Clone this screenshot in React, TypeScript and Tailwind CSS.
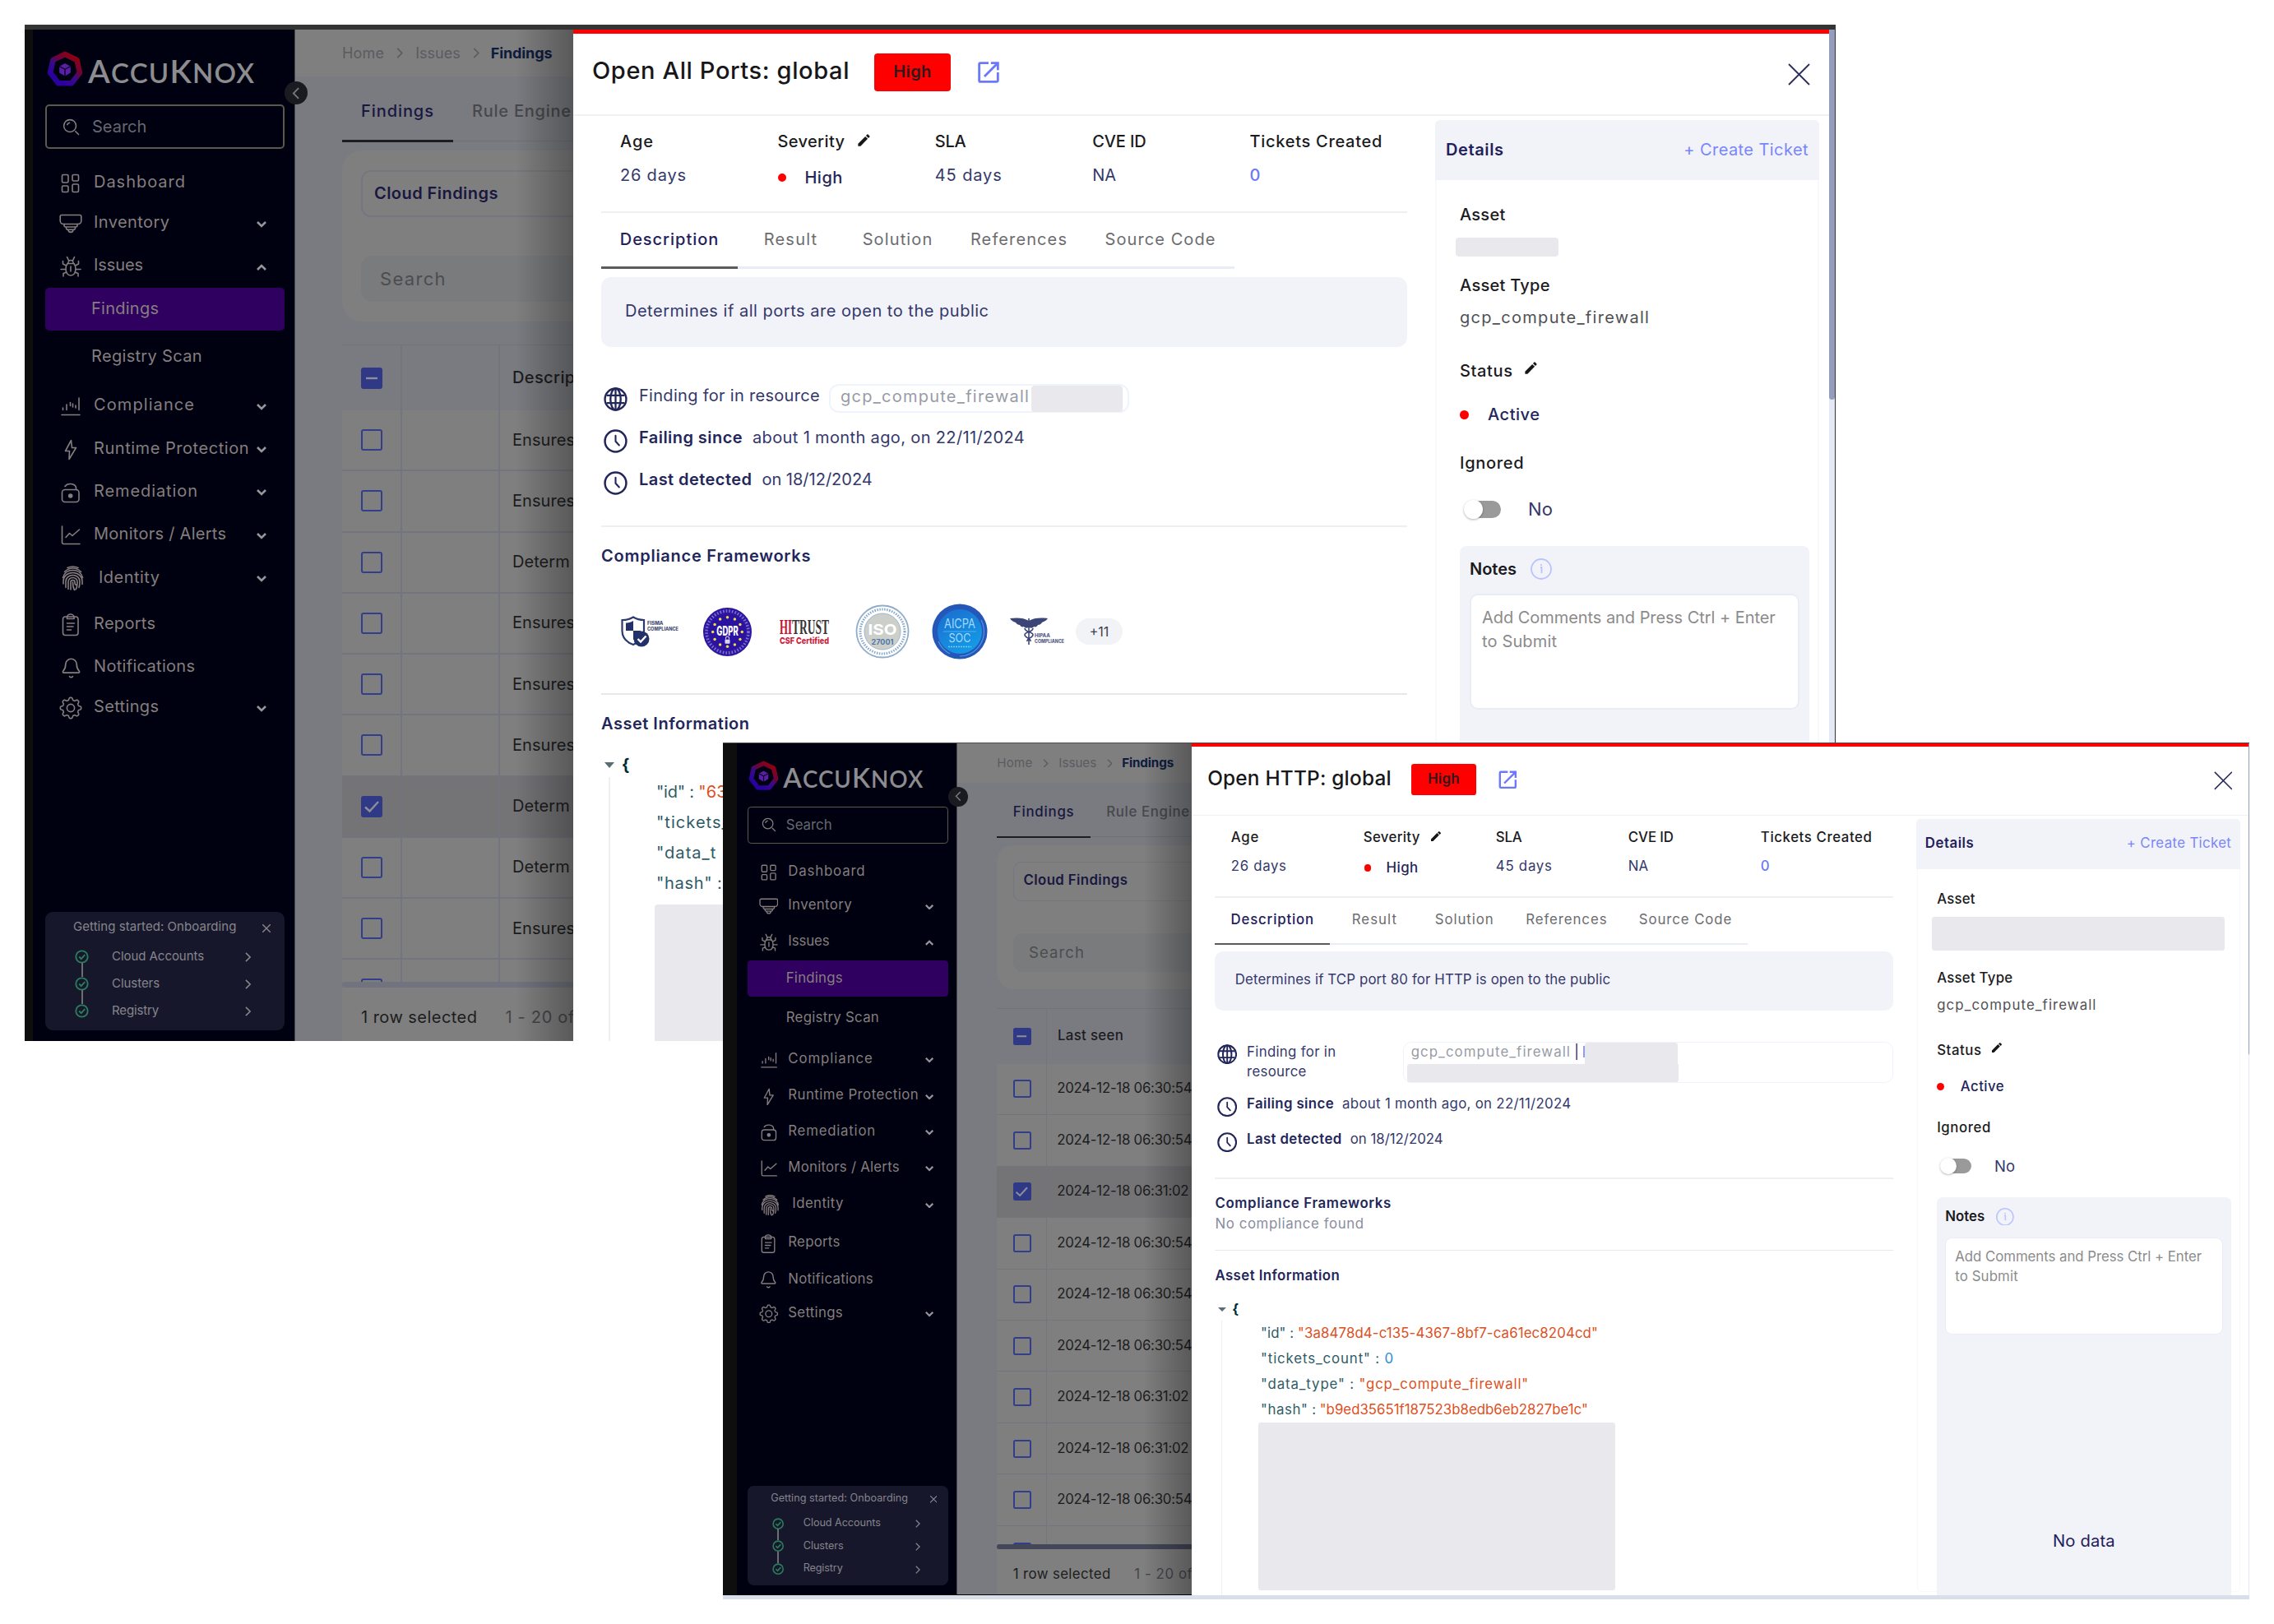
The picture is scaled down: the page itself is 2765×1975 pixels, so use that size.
import type { ReactNode } from "react";
import { MdEdit, MdOutlineOpenInNew } from "react-icons/md";
import { Bell } from "lucide-react";

type Variant = "ports" | "http";

/* ---------- sidebar icons ---------- */

const line = {
  fill: "none",
  stroke: "currentColor",
  strokeWidth: 1.6,
  strokeLinecap: "round" as const,
  strokeLinejoin: "round" as const,
};

const DashboardIcon = () => (
  <svg viewBox="0 0 24 24" className="size-[24px]" {...line}>
    <rect x="1.5" y="1.5" width="7.5" height="9.5" rx="1.5" />
    <rect x="14" y="1.5" width="7.5" height="7.5" rx="1.5" />
    <rect x="1.5" y="15" width="7.5" height="7.5" rx="1.5" />
    <rect x="14" y="13" width="7.5" height="9.5" rx="1.5" />
  </svg>
);

const InventoryIcon = () => (
  <svg viewBox="0 0 28 24" className="h-[24px] w-[28px]" {...line}>
    <path d="M3 1.500h22a1.800 1.800 0 0 1 1.800 1.800v5.200a4 4 0 0 1-4 4H5.200a4 4 0 0 1-4-4V3.300A1.800 1.800 0 0 1 3 1.500z" />
    <path d="M6 12.500v1.500a2 2 0 0 0 2 2h12a2 2 0 0 0 2-2v-1.500M8.500 16v1.200a2 2 0 0 0 2 2h7a2 2 0 0 0 2-2V16M11 19.200a3 3.200 0 0 0 6 0" />
  </svg>
);

const BugIcon = () => (
  <svg viewBox="0 0 26 26" className="size-[26px]" {...line}>
    <path d="M9 9.500h8c1.500 2 2 4 2 6.500 0 5-2.500 8-6 8s-6-3-6-8c0-2.500.5-4.500 2-6.500z" />
    <path d="M9.800 9.500a3.200 4 0 0 1 6.400 0M10.500 5.800L8.500 1.500M15.500 5.800l2-4.300M13 13v6" />
    <path d="M7.500 12L3.500 10V6.500M18.500 12l4-2V6.500M7 16.500H1M19 16.500h6M8 20l-4 1.500V25M18 20l4 1.500V25" />
  </svg>
);

const BoltIcon = () => (
  <svg viewBox="0 0 16 26" className="h-[26px] w-[16px]" {...line}>
    <path d="M8.500 1.500L1.500 14.500h5L6 24.500 14.500 10.500H9.500z" />
  </svg>
);

const FingerprintIcon = () => (
  <svg viewBox="0 0 27 31" className="ml-[5px] h-[31px] w-[27px]" {...line}>
    <path d="M7 2.500a15 15 0 0 1 13 0M3.500 7.500a13.500 13.500 0 0 1 20 0M1.500 14.500c1.500-5.500 6-9 12-9s10.500 3.500 12 9" />
    <path d="M2 22v-3.500a11.500 10 0 0 1 23 0v4M5 26.500v-7.500a8.500 7.500 0 0 1 17 0c0 3 0 5-1 7.500" />
    <path d="M8 28.500v-9a5.500 5 0 0 1 11 0c0 4.500 0 7-2 9.500M11 29v-9a2.500 2.500 0 0 1 5 0c0 2.500.500 3.500 2 3.500M13.500 20c0 4 .5 7 2 9.500" />
  </svg>
);

const ReportIcon = () => (
  <svg viewBox="0 0 22 28" className="h-[28px] w-[22px]" {...line}>
    <rect x="1.500" y="4" width="18.500" height="22.500" rx="3" />
    <path d="M6.500 4.500a4.300 3.500 0 0 1 8.600 0v2H6.500zM6.500 12h9M6.500 16h7.500M6.500 20h5" />
  </svg>
);

const ComplianceIcon = () => (
  <svg viewBox="0 0 24 24" className="size-[24px]" {...line}>
    <path d="M1 22.500h22M2.500 14v2.500M7 10v6.500M11.500 7.500v4M14.500 9v4M18 11v3M22 2v14.500" />
  </svg>
);

const RemediationIcon = () => (
  <svg viewBox="0 0 24 26" className="h-[26px] w-[24px]" {...line}>
    <rect x="1.500" y="9.500" width="20.500" height="15" rx="3.500" />
    <path d="M5 5.500a7.200 5.500 0 0 1 13.500 1.500v2.500" />
    <circle cx="11.700" cy="17" r="2" fill="currentColor" />
  </svg>
);

const MonitorIcon = () => (
  <svg viewBox="0 0 24 24" className="size-[24px]" {...line}>
    <path d="M1.500 1v19.500a2 2 0 0 0 2 2H23M6 14.500l4.500-5 3.500 3L22.500 5" />
  </svg>
);

/* Eight-lobed cog outline traced around a circle. */
const cog = Array.from({ length: 96 }, (_, i) => {
  const a = (i * Math.PI) / 48;
  const r = 11.2 + 1.5 * Math.tanh(2.2 * Math.cos(8 * a));
  return `${(14 + r * Math.cos(a)).toFixed(2)},${(14 + r * Math.sin(a)).toFixed(2)}`;
}).join(" ");

const GearIcon = () => (
  <svg viewBox="0 0 28 28" className="size-[28px]" {...line}>
    <circle cx="14" cy="14" r="4.600" />
    <polygon points={cog} />
  </svg>
);

const Chevron = ({ up }: { up?: boolean }) => (
  <svg viewBox="0 0 12 8" className="h-[8px] w-[12px]" fill="none" stroke="currentColor" strokeWidth="2.600">
    <path d={up ? "M1 7l5-5 5 5" : "M1 1l5 5 5-5"} />
  </svg>
);

const ChevronRight = ({ className }: { className: string }) => (
  <svg viewBox="0 0 8 14" className={className} fill="none" stroke="currentColor" strokeWidth="1.800">
    <path d="M1 1l6 6-6 6" />
  </svg>
);

const Logo = () => (
  <div className="flex h-[44px] items-center">
    <svg viewBox="0 0 44 44" className="ml-[2px] h-[45px] w-[44px] shrink-0">
      <defs>
        <linearGradient id="ring" x1="0.850" y1="0.100" x2="0.250" y2="0.900">
          <stop offset="0" stopColor="#8f0012" />
          <stop offset="0.350" stopColor="#6b0438" />
          <stop offset="0.600" stopColor="#3a0a86" />
          <stop offset="1" stopColor="#2a00a0" />
        </linearGradient>
      </defs>
      <path d="M22 3.500 36.500 10.500 40 26 30 38.800H14L4 26 7.500 10.500Z" fill="none" stroke="url(#ring)" strokeWidth="6.500" strokeLinejoin="round" />
      <path d="M22 14.500l6.800 3.700v7.800L22 30l-6.800-4V18.200z" fill="#5a1fa8" />
      <path d="M15.200 18.200 22 21.800l6.800-3.600M22 21.800V30" stroke="#0a0420" strokeWidth="1.400" fill="none" />
    </svg>
    <div className="ml-[6px] mt-[6px] flex items-baseline font-['Lato'] font-semibold tracking-[1.2px] text-[#8d8d90]">
      <span className="text-[39px] leading-[44px]">A</span>
      <span className="text-[33px] leading-[44px]">CCU</span>
      <span className="text-[39px] leading-[44px]">K</span>
      <span className="text-[33px] leading-[44px]">NOX</span>
    </div>
  </div>
);

/* ---------- sidebar ---------- */

const menu: { label: string; icon?: ReactNode; row: string; text: string; arrow?: "up" | "down"; active?: boolean }[] = [
  { label: "Dashboard", icon: <DashboardIcon />, row: "h-[50px]", text: "tracking-[0.98px]" },
  { label: "Inventory", icon: <InventoryIcon />, row: "h-[48px]", text: "tracking-[0.42px]", arrow: "down" },
  { label: "Issues", icon: <BugIcon />, row: "h-[56px]", text: "tracking-[-0.1px]", arrow: "up" },
  { label: "Findings", row: "h-[52px]", text: "tracking-[0.26px]", active: true },
  { label: "Registry Scan", row: "h-[63px]", text: "tracking-[0.32px]" },
  { label: "Compliance", icon: <ComplianceIcon />, row: "h-[54px]", text: "tracking-[1.09px]", arrow: "down" },
  { label: "Runtime Protection", icon: <BoltIcon />, row: "h-[51px]", text: "tracking-[0.54px]", arrow: "down" },
  { label: "Remediation", icon: <RemediationIcon />, row: "h-[53px]", text: "tracking-[0.91px]", arrow: "down" },
  { label: "Monitors / Alerts", icon: <MonitorIcon />, row: "h-[52px]", text: "tracking-[0.27px]", arrow: "down" },
  { label: "Identity", icon: <FingerprintIcon />, row: "h-[53px]", text: "ml-[6px] tracking-[0.48px]", arrow: "down" },
  { label: "Reports", icon: <ReportIcon />, row: "h-[59px]", text: "tracking-[0.3px]" },
  { label: "Notifications", icon: <Bell className="size-[27px] stroke-[1.5]" />, row: "h-[46px]", text: "tracking-[0.31px]" },
  { label: "Settings", icon: <GearIcon />, row: "h-[52px]", text: "tracking-[0.35px]", arrow: "down" },
];

const steps = [
  { label: "Cloud Accounts", text: "tracking-[-0.05px]" },
  { label: "Clusters", text: "tracking-[-0.05px]" },
  { label: "Registry", text: "tracking-[-0.15px]" },
];

const Sidebar = () => (
  <aside className="flex h-[1230px] w-[319px] shrink-0 flex-col border-r border-[#4a4b50] bg-[#000110] pl-[15px] pr-[12px] text-[20px] text-[#857e7e]">
    <div className="mt-[26px] h-[65px] shrink-0">
      <Logo />
    </div>
    <div className="flex h-[54px] shrink-0 items-center rounded-[5px] border-2 border-[#5a594e] pl-[19px]">
      <svg viewBox="0 0 22 22" className="size-[21px]" {...line}>
        <circle cx="9.500" cy="9.500" r="7.800" />
        <path d="M16.500 16.500l4 4M6 8a4 4 0 0 1 3-2.500" />
      </svg>
      <span className="ml-[15px] text-[#67686f]">Search</span>
    </div>
    <nav className="mt-[15px] flex flex-col">
      {menu.map((m) => (
        <div key={m.label} className={`flex items-center whitespace-nowrap ${m.row} ${m.active ? "rounded-[5px] bg-[#300060]" : ""}`}>
          {m.icon ? (
            <>
              <span className="mt-[4px] flex w-[59px] shrink-0 justify-center pl-[3px]">{m.icon}</span>
              <span className={m.text}>{m.label}</span>
            </>
          ) : (
            <span className={`mb-[2px] ml-[56px] ${m.text}`}>{m.label}</span>
          )}
          {m.arrow && (
            <span className="ml-auto mr-[22px] mt-[5px] text-[#96969a]">
              <Chevron up={m.arrow === "up"} />
            </span>
          )}
        </div>
      ))}
    </nav>
    <div className="mb-[13px] mt-auto h-[144px] shrink-0 rounded-[9px] bg-[#17172c] pl-[34px] text-[15px] text-[#85858b]">
      <div className="flex h-[37px] items-center">
        <span className="tracking-[0.05px]">Getting started: Onboarding</span>
        <svg viewBox="0 0 10 10" className="ml-auto mr-[17px] mt-[3px] size-[10px]" stroke="currentColor" strokeWidth="1.400">
          <path d="M0 0l10 10M10 0L0 10" />
        </svg>
      </div>
      <div className="flex flex-col">
        {steps.map((s, i) => (
          <div key={s.label} className="flex h-[33px] items-center">
            <span className="relative mt-[2px] ml-[2px] flex size-[17px] items-center justify-center">
              {i > 0 && <span className="absolute bottom-[17px] left-[7.500px] h-[17px] w-[2px] bg-[#6d6d74]" />}
              <svg viewBox="0 0 18 18" className="size-[17px]" fill="none" stroke="#2a7d5c" strokeWidth="2">
                <circle cx="9" cy="9" r="7.600" />
                <path d="M5.500 9l2.700 2.700L13 6.500" />
              </svg>
            </span>
            <span className={`ml-[28px] mt-px ${s.text}`}>{s.label}</span>
            <ChevronRight className="ml-auto mr-[41px] mt-[3px] h-[12px] w-[7px]" />
          </div>
        ))}
      </div>
    </div>
  </aside>
);

/* ---------- findings list ---------- */

const Checkbox = ({ state }: { state: "empty" | "checked" | "mixed" }) =>
  state === "empty" ? (
    <span className="h-[26px] w-[26px] shrink-0 rounded-[3px] border-[2.500px] border-[#333e8a]" />
  ) : (
    <span className="flex h-[26px] w-[26px] shrink-0 items-center justify-center rounded-[3px] bg-[#2f3986]">
      <svg viewBox="0 0 22 22" className="size-[22px]" fill="none" stroke="#8e8f98" strokeWidth="2.400">
        <path d={state === "mixed" ? "M4 11h14" : "M3 11.500l5.500 5L19 5"} />
      </svg>
    </span>
  );

const portRows = ["Ensures", "Ensures", "Determ", "Ensures", "Ensures", "Ensures", "Determ", "Determ", "Ensures", ""];
const httpRows = ["30:54", "30:54", "31:02", "30:54", "30:54", "30:54", "31:02", "31:02", "30:54", ""].map((t) =>
  t ? `2024-12-18 06:${t}` : "",
);

const FindingsList = ({ variant }: { variant: Variant }) => {
  const ports = variant === "ports";
  const rows = ports ? portRows : httpRows;
  const selected = ports ? 6 : 2;
  return (
    <section className="relative flex h-[1230px] w-[338px] shrink-0 flex-col bg-[#797b80]">
      <div className="flex h-[57px] shrink-0 items-center bg-[#7f7f7f] pl-[57px] text-[18px] text-[#5b5b61]">
        <span className="tracking-[0.2px]">Home</span>
        <ChevronRight className="ml-[15px] h-[13px] w-[8px]" />
        <span className="ml-[15px]">Issues</span>
        <ChevronRight className="ml-[15px] h-[13px] w-[8px]" />
        <span className="ml-[14px] font-bold tracking-[-0.1px] text-[#0d1b3d]">Findings</span>
      </div>
      <div className="ml-[57px] flex h-[80px] shrink-0 overflow-hidden whitespace-nowrap text-[20px] font-medium">
        <div className="flex w-[135px] shrink-0 items-center border-b-[3px] border-[#1d1d22] pl-[23px] pt-[7px] tracking-[0.93px] text-[#191740]">Findings</div>
        <div className="mb-px flex w-full shrink-0 items-center border-b border-[#6f7178] pl-[23px] pt-[6px] tracking-[0.76px] text-[#47484c]">Rule Engine</div>
      </div>
      <div className="ml-[57px] mt-[10px] h-[208px] shrink-0 rounded-l-[24px] bg-[#7f7f7f] pl-[23px] pt-[24px]">
        <div className="flex h-[57px] items-center rounded-l-[12px] border-y-2 border-l-2 border-[#757780] pb-[2px] pl-[14px] text-[20px] font-semibold tracking-[0.45px] text-[#191740]">
          Cloud Findings
        </div>
        <div className="mt-[47px] flex h-[56px] items-center rounded-l-[14px] bg-[#797b7d] pl-[23px] text-[22px] tracking-[1.3px] text-[#4b4d4f]">Search</div>
      </div>
      <div className="ml-[57px] mt-[28px] flex min-h-0 flex-1 flex-col overflow-hidden border-t border-[#70737c] text-[20px] text-[#1c1c1e]">
        <div className="flex h-[79px] shrink-0 items-stretch font-medium">
          <div className="flex w-[72.500px] shrink-0 items-center border-r-2 border-[#72757e] pl-[23px]">
            <Checkbox state="mixed" />
          </div>
          {ports && <div className="w-[119.500px] shrink-0 border-r-2 border-[#72757e]" />}
          <div className="flex items-center pb-[2px] pl-[15px] tracking-[0.39px]">{ports ? "Description" : "Last seen"}</div>
        </div>
        {rows.map((r, i) => (
          <div
            key={i}
            className={`flex h-[74.250px] shrink-0 items-stretch border-b-2 border-[#72757e] ${i === selected ? "bg-[#747476]" : "bg-[#7f7f7f]"}`}
          >
            <div className="flex w-[72.500px] shrink-0 items-center border-r-2 border-[#72757e] pl-[23px]">
              <Checkbox state={i === selected ? "checked" : "empty"} />
            </div>
            {ports && <div className="w-[119.500px] shrink-0 border-r-2 border-[#72757e]" />}
            <div className={`flex items-center whitespace-nowrap pb-px ${ports ? "pl-[15px] tracking-[0.06px]" : "pl-[14px] tracking-[-0.3px]"}`}>{r}</div>
          </div>
        ))}
      </div>
      <div className={`ml-[57px] h-[7px] shrink-0 rounded-l-full ${ports ? "bg-[#71747e]" : "bg-[#434757]"}`} />
      <div className="ml-[57px] flex h-[65px] shrink-0 items-center overflow-hidden whitespace-nowrap bg-[#7f7f7f] pb-px pl-[23px] pt-[8px] text-[20px]">
        <span className="tracking-[0.46px] text-[#1c1c1e]">1 row selected</span>
        <span className="ml-[34px] tracking-[0.7px] text-[#45464a]">1 - 20 of</span>
      </div>
      <div className="absolute inset-y-0 right-0 w-[70px] bg-gradient-to-r from-transparent to-black/30" />
      <div className="absolute left-[-13px] top-[63px] flex size-[28px] items-center justify-center rounded-full bg-[#191b20] text-[#77787c]">
        <svg viewBox="0 0 10 16" className="mr-[2px] h-[15px] w-[9px]" fill="none" stroke="currentColor" strokeWidth="2">
          <path d="M9 1L2 8l7 7" />
        </svg>
      </div>
    </section>
  );
};

/* ---------- drawer pieces ---------- */

const GlobeIcon = () => (
  <svg viewBox="0 0 28 28" className="size-[29px]" fill="none" stroke="#23265a" strokeWidth="2.300">
    <circle cx="14" cy="14" r="12.500" />
    <ellipse cx="14" cy="14" rx="6" ry="12.500" />
    <path d="M14 1.500v25M3.500 9.500h21M3.500 18.500h21" strokeWidth="2.200" />
  </svg>
);

const ClockIcon = () => (
  <svg viewBox="0 0 28 28" className="size-[29px]" fill="none" stroke="#23265a" strokeWidth="2.400" strokeLinecap="round">
    <circle cx="14" cy="14" r="12.500" />
    <path d="M14 7.500v6.800l4.200 4.500" strokeWidth="2" />
  </svg>
);

const Pencil = () => <MdEdit className="size-[19px] text-[#17171a]" />;

const Redacted = ({ className }: { className: string }) => <div className={`bg-[#e9e8ed] ${className}`} />;

const stats: { label: string; value?: string; text: string; valueText?: string }[] = [
  { label: "Age", value: "26 days", text: "tracking-[0.92px]", valueText: "text-[#34386b] tracking-[0.8px]" },
  { label: "Severity", text: "tracking-[0.39px]" },
  { label: "SLA", value: "45 days", text: "tracking-[-0.2px]", valueText: "text-[#34386b] tracking-[0.89px]" },
  { label: "CVE ID", value: "NA", text: "tracking-[-0.12px]", valueText: "text-[#34386b]" },
  { label: "Tickets Created", value: "0", text: "tracking-[0.7px]", valueText: "font-medium text-[#6b78fa]" },
];

const tabs = [
  { label: "Result", cls: "w-[129px] tracking-[1.24px]" },
  { label: "Solution", cls: "w-[131px] tracking-[1.12px]" },
  { label: "References", cls: "w-[164px] tracking-[1.11px]" },
  { label: "Source Code", cls: "w-[180px] tracking-[1.09px]" },
];

const Laurel = ({ r }: { r: number }) => (
  <>
    {Array.from({ length: 12 }, (_, i) => {
      const a = (i * Math.PI) / 6;
      return <circle key={i} cx={29 + r * Math.sin(a)} cy={29 - r * Math.cos(a)} r="1.700" fill="#f2dc3c" />;
    })}
  </>
);

const ComplianceLogos = () => (
  <div className="mt-[46px] flex h-[68px] items-center pl-[24px] font-['Inter']">
    <svg viewBox="0 0 70 38" className="h-[38px] w-[70px]">
      <path d="M1.500 5C7 5 11 4 15 1.500 19 4 23 5 28 5v13c0 8-6 14-13 17C7 32 1.500 26 1.500 18z" fill="#fff" stroke="#2c3a6e" strokeWidth="2.200" />
      <path d="M6 8.500c4 0 6-1 9-2.500v12H6z" fill="#23306a" />
      <path d="M15 18h9c0 5-4 9-9 11z" fill="#23306a" />
      <circle cx="25" cy="28" r="9.500" fill="#23306a" />
      <path d="M20.500 28l3.500 3.500 6.500-7" fill="none" stroke="#fff" strokeWidth="2.400" />
      <text x="32" y="11" fontSize="6" fontWeight="800" fill="#4a5078">FISMA</text>
      <text x="32" y="18" fontSize="6" fontWeight="800" fill="#4a5078" textLength="38" lengthAdjust="spacingAndGlyphs">COMPLIANCE</text>
    </svg>
    <svg viewBox="0 0 58 58" className="ml-[30px] size-[59px]">
      <circle cx="29" cy="29" r="29" fill="#2f16a0" />
      <circle cx="29" cy="29" r="25" fill="none" stroke="#7a70cc" strokeWidth="3.500" strokeDasharray="1.600 2" />
      <circle cx="29" cy="29" r="21.500" fill="#2a12a2" />
      <Laurel r={17.500} />
      <text x="29" y="33" textAnchor="middle" fontSize="15" fontWeight="800" fill="#fff" textLength="26" lengthAdjust="spacingAndGlyphs">GDPR</text>
      <rect x="26" y="38" width="6" height="5" rx="1" fill="#d7d3f5" />
      <path d="M27 38v-1.500a2 2 0 0 1 4 0V38" fill="none" stroke="#d7d3f5" />
    </svg>
    <svg viewBox="0 0 61 32" className="ml-[34px] h-[32px] w-[61px] font-['Liberation_Serif']">
      <text x="0" y="19" fontSize="26" fontWeight="700" fill="#c8102e" textLength="15" lengthAdjust="spacingAndGlyphs">HI</text>
      <text x="15" y="19" fontSize="26" fontWeight="700" fill="#3a3335" textLength="45" lengthAdjust="spacingAndGlyphs">TRUST</text>
      <text x="0" y="31" fontSize="11" fontWeight="800" fill="#d0213c" textLength="60" lengthAdjust="spacingAndGlyphs" className="font-['Inter']">CSF Certified</text>
    </svg>
    <svg viewBox="0 0 66 66" className="ml-[31px] size-[66px]">
      <circle cx="33" cy="33" r="31.500" fill="#fff" stroke="#8faecb" strokeWidth="1.800" />
      <circle cx="33" cy="33" r="27" fill="none" stroke="#8aa8c9" strokeWidth="3" strokeDasharray="1.500 1.500" />
      <circle cx="33" cy="33" r="22" fill="#cccfca" stroke="#9db6cc" />
      <text x="33" y="37" textAnchor="middle" fontSize="18" fontWeight="700" fill="#fff" textLength="35" lengthAdjust="spacingAndGlyphs">ISO</text>
      <text x="33" y="48.500" textAnchor="middle" fontSize="9" fontWeight="700" fill="#4f76a8">27001</text>
    </svg>
    <svg viewBox="0 0 68 68" className="ml-[27px] size-[68px]">
      <defs>
        <linearGradient id="soc" x1="0.200" y1="0" x2="0.800" y2="1">
          <stop offset="0" stopColor="#1b6fd0" />
          <stop offset="1" stopColor="#149ee8" />
        </linearGradient>
      </defs>
      <circle cx="34" cy="34" r="33.500" fill="#2457b8" />
      <circle cx="34" cy="34" r="27" fill="url(#soc)" />
      <path d="M60 20a30 30 0 0 1-26 44M8 46a30 30 0 0 0 14 15" fill="none" stroke="#4f97e4" strokeWidth="1.200" />
      <text x="34" y="30" textAnchor="middle" fontSize="16" fill="#9fdcff" textLength="38" lengthAdjust="spacingAndGlyphs">AICPA</text>
      <path d="M14 34h40" stroke="#5bbcf3" strokeWidth="0.800" />
      <text x="34" y="47" textAnchor="middle" fontSize="15" fill="#9fdcff" textLength="27" lengthAdjust="spacingAndGlyphs">SOC</text>
      <path d="M20 52.500h28" stroke="#7cc8f5" strokeWidth="1.500" strokeDasharray="2 1" />
    </svg>
    <svg viewBox="0 0 66 36" className="ml-[27px] h-[36px] w-[66px]">
      <path d="M23 5C17 1 8 1 0 2c2 3 4 4 7 5 1 2 3 3 5 3 1 2 3 3 5 2 1 2 3 2 6 1zM23 5c6-4 15-4 23-3-2 3-4 4-7 5-1 2-3 3-5 3-1 2-3 3-5 2-1 2-3 2-6 1z" fill="#3b4677" />
      <path d="M23 2v32M18 14c0 5 10 4 10 8s-8 4-7 8M28 14c0 5-10 4-10 8s8 4 7 8" fill="none" stroke="#3b4677" strokeWidth="1.600" />
      <text x="30" y="25" fontSize="6" fontWeight="800" fill="#5a6089">HIPAA</text>
      <text x="30" y="32" fontSize="6" fontWeight="800" fill="#5a6089" textLength="36" lengthAdjust="spacingAndGlyphs">COMPLIANCE</text>
    </svg>
    <span className="ml-[14px] flex h-[32px] w-[57px] items-center justify-center rounded-full bg-[#f2f3f7] text-[16px] text-[#3c3f52]">+11</span>
  </div>
);

const Key = ({ children, className = "" }: { children: ReactNode; className?: string }) => (
  <span className={`text-[#2f5b66] ${className}`}>{children}</span>
);
const Str = ({ children, className = "" }: { children: ReactNode; className?: string }) => (
  <span className={`text-[#dd4f22] ${className}`}>{children}</span>
);

const AssetJson = ({ variant }: { variant: Variant }) => {
  const ports = variant === "ports";
  return (
    <div className="text-[20px] text-[#2f5b66]">
      <div className="mt-[26px] flex h-[24px] items-center pl-[4px]">
        <span className="border-x-[6.500px] border-t-[7px] border-x-transparent border-t-[#586e75]" />
        <span className="ml-[9px] font-bold text-[#002b36]">{"{"}</span>
      </div>
      <div className="ml-[9px] mt-[3px] h-[400px] whitespace-pre border-l-2 border-[#efefef] pl-[56px] leading-[37px]">
        <div>
          <Key className={ports ? "tracking-[-0.2px]" : "tracking-[0.1px]"}>"id" : </Key>
          <Str className="tracking-[0.14px]">{ports ? '"63' : '"3a8478d4-c135-4367-8bf7-ca61ec8204cd"'}</Str>
        </div>
        <div>
          <Key className="tracking-[1.05px]">{ports ? '"tickets_' : '"tickets_count"'}</Key>
          {!ports && (
            <>
              <Key className="tracking-[1px]"> : </Key>
              <span className="text-[#268bd2]">0</span>
            </>
          )}
        </div>
        <div>
          <Key className="tracking-[1.05px]">{ports ? '"data_t' : '"data_type"'}</Key>
          {!ports && (
            <>
              <Key className="tracking-[1px]"> : </Key>
              <Str className="tracking-[1px]">"gcp_compute_firewall"</Str>
            </>
          )}
        </div>
        <div>
          <Key className="tracking-[0.7px]">"hash"</Key>
          <Key> : </Key>
          {!ports && <Str>"b9ed35651f187523b8edb6eb2827be1c"</Str>}
        </div>
        <Redacted className={ports ? "ml-[-2px] mt-[7px] h-[242px] w-[515px] rounded-[4px]" : "ml-[-4px] h-[243px] w-[516px] rounded-[4px]"} />
      </div>
    </div>
  );
};

const DrawerMain = ({ variant }: { variant: Variant }) => {
  const ports = variant === "ports";
  return (
    <div className="w-[980px] shrink-0 text-[20px]">
      <div className="grid h-[116px] grid-cols-[191.400px_191.400px_191.400px_191.400px_1fr] whitespace-nowrap pl-[23px] pt-[19px]">
        {stats.map((s) => (
          <div key={s.label}>
            <div className="flex h-[24px] items-center font-medium text-[#1b1b1e]">
              <span className={s.text}>{s.label}</span>
              {!s.value && (
                <span className="mb-[4px] ml-[14px]">
                  <Pencil />
                </span>
              )}
            </div>
            {s.value ? (
              <div className={`mt-[17px] leading-[24px] ${s.valueText ?? ""}`}>{s.value}</div>
            ) : (
              <div className="mt-[20px] flex h-[24px] items-center font-medium text-[#23265a]">
                <span className="ml-px size-[10px] rounded-full bg-[#fe0000]" />
                <span className="ml-[22px] tracking-[0.55px]">High</span>
              </div>
            )}
          </div>
        ))}
      </div>
      <div className="h-[2px] bg-[#efefef]" />
      <div className="flex h-[68px] text-center leading-[64px] text-[#6c6c70]">
        <div className="w-[166px] border-b-[3px] border-[#5b5b5d] font-medium tracking-[0.97px] text-[#23205c]">Description</div>
        {tabs.map((t) => (
          <div key={t.label} className={`border-b-[3px] border-[#e8ecf4] ${t.cls}`}>{t.label}</div>
        ))}
      </div>
      <div className="mt-[10px] flex h-[85px] items-center rounded-[12px] bg-[#f2f3f9] pb-[3px] pl-[29px] text-[#34386b]">
        {ports ? (
          <span className="tracking-[0.51px]">Determines if all ports are open to the public</span>
        ) : (
          <span className="tracking-[0.15px]">Determines if TCP port 80 for HTTP is open to the public</span>
        )}
      </div>
      <div className="mt-[45px] flex pl-[3px] text-[#34386b]">
        <span className="mt-[4px]">
          <GlobeIcon />
        </span>
        {ports ? (
          <>
            <span className="ml-[14px] leading-[28px] tracking-[0.3px]">Finding for in resource</span>
            <div className="ml-[11px] flex h-[35px] w-[365px] rounded-[12px] border-2 border-[#eef3fd] pl-[12px] text-[#989ba6]">
              <span className="leading-[27px] tracking-[1.25px]">gcp_compute_firewall</span>
              <Redacted className="ml-[2px] h-[32px] w-[111px] rounded-[4px]" />
            </div>
          </>
        ) : (
          <>
            <span className="ml-[14px] w-[226px] shrink-0 pr-[96px] leading-[29px] tracking-[0.36px]">Finding for in resource</span>
            <div className="h-[60px] flex-1 rounded-[12px] border-2 border-[#eef3fd]">
              <div className="flex pl-[10px]">
                <span className="leading-[28px] tracking-[1.3px] text-[#989ba6]">gcp_compute_firewall</span>
                <span className="ml-[5px] leading-[27px] text-[#23265a]">|</span>
                <span className="ml-[6px] mt-[5px] h-[17px] w-[2px] bg-[#8f9bff]" />
                <Redacted className="h-[31px] w-[135px] rounded-t-[4px]" />
              </div>
              <Redacted className="ml-[5px] h-[27px] w-[392px] rounded-b-[4px] rounded-tl-[4px]" />
            </div>
          </>
        )}
      </div>
      <div className="mt-[20px] flex h-[28px] whitespace-nowrap pl-[3px] leading-[20px] text-[#34386b]">
        <ClockIcon />
        <b className="ml-[14px] font-semibold tracking-[0.44px] text-[#23265a]">Failing since</b>
        <span className="ml-[12px] tracking-[0.36px]">about 1 month ago, on 22/11/2024</span>
      </div>
      <div className="mt-[23px] flex h-[28px] whitespace-nowrap pl-[3px] leading-[20px] text-[#34386b]">
        <ClockIcon />
        <b className="ml-[14px] font-semibold tracking-[0.44px] text-[#23265a]">Last detected</b>
        <span className="ml-[12px]">on 18/12/2024</span>
      </div>
      <div className="mt-[38px] h-[2px] bg-[#efefef]" />
      <div className="mt-[23px] font-semibold leading-[24px] tracking-[0.75px] text-[#23265a]">Compliance Frameworks</div>
      {ports ? (
        <ComplianceLogos />
      ) : (
        <div className="mt-[5px] leading-[24px] tracking-[0.72px] text-[#8a8ca0]">No compliance found</div>
      )}
      <div className={`h-[2px] bg-[#e8e8e8] ${ports ? "mt-[41px]" : "mt-[26px]"}`} />
      <div className="mt-[23px] font-semibold leading-[24px] tracking-[0.51px] text-[#23265a]">Asset Information</div>
      <AssetJson variant={variant} />
    </div>
  );
};

const Details = ({ variant }: { variant: Variant }) => {
  const ports = variant === "ports";
  return (
    <div className="mt-[5px] h-[1117px] w-[467px] shrink-0 rounded-[6px] border-2 border-[#f8f9fc] text-[20px] font-medium text-[#1b1b1e]">
      <div className="-mx-[2px] -mt-[2px] flex h-[73px] items-center justify-between rounded-t-[6px] bg-[#f2f3f8] px-[13px] pb-[2px]">
        <span className="font-semibold tracking-[0.6px] text-[#23205c]">Details</span>
        <span className="font-normal tracking-[0.43px] text-[#7986fb]">+ Create Ticket</span>
      </div>
      <div className="pl-[28px] leading-[24px]">
        <div className={`tracking-[0.25px] ${ports ? "mt-[30px]" : "mt-[31px]"}`}>Asset</div>
        <Redacted className={ports ? "ml-[-5px] mt-[16px] h-[23px] w-[125px] rounded-[4px]" : "ml-[-7px] mt-[14px] h-[48px] w-[423px] rounded-[4px]"} />
        <div className={`tracking-[0.28px] ${ports ? "mt-[23px]" : "mt-[28px]"}`}>Asset Type</div>
        <div className="mt-[15px] font-normal tracking-[1.3px] text-[#505054]">gcp_compute_firewall</div>
        <div className="mt-[40px] flex items-center">
          <span className="tracking-[0.64px]">Status</span>
          <span className="mb-[7px] ml-[12px]">
            <Pencil />
          </span>
        </div>
        <div className="mt-[28px] flex items-center text-[#23265a]">
          <span className="size-[11px] rounded-full bg-[#fe0000]" />
          <span className="ml-[23px] tracking-[0.55px]">Active</span>
        </div>
        <div className="mt-[35px] tracking-[0.68px]">Ignored</div>
        <div className="mt-[32px] flex items-center text-[22px] font-normal text-[#34386b]">
          <span className="relative ml-[14px] h-[21px] w-[36px] rounded-full bg-[#9a9a9a]">
            <span className="absolute -left-[9px] -top-px size-[23px] rounded-full bg-white shadow-[0_1px_3px_rgba(0,0,0,0.3)]" />
          </span>
          <span className="ml-[33px] tracking-[0.23px]">No</span>
        </div>
        <div className="mt-[33px] h-[620px] w-[425px] rounded-[8px] bg-[#f2f3f9] px-[12px] pt-[15px]">
          <div className="flex h-[26px] items-center">
            <span className="font-semibold">Notes</span>
            <svg viewBox="0 0 26 26" className="ml-[17px] size-[26px]" fill="none" stroke="#b9c4fc" strokeWidth="1.800">
              <circle cx="13" cy="13" r="12" />
              <path d="M12 11h1.500v7M13 7v2" />
            </svg>
          </div>
          <div className="mt-[17px] h-[141px] rounded-[10px] border-2 border-[#e9ecf5] bg-white pl-[13px] pt-[13px] font-normal leading-[28.500px] text-[#8b8b8b]">
            <div className="whitespace-nowrap tracking-[-0.05px]">Add Comments and Press Ctrl + Enter</div>
            <div className="tracking-[0.15px]">to Submit</div>
          </div>
          {!ports && <div className="mt-[286px] text-center text-[24px] font-normal tracking-[0.19px] text-[#23205c]">No data</div>}
        </div>
      </div>
    </div>
  );
};

const Drawer = ({ variant }: { variant: Variant }) => (
  <section className="flex h-full shrink-0 bg-white">
    <div className="flex h-full w-[1527px] shrink-0 flex-col">
      <div className="h-[5px] shrink-0 bg-[#fe0000]" />
      <div className="flex h-[100px] shrink-0 items-center whitespace-nowrap border-b-2 border-[#f1f1f1] pb-[4px] pl-[23px] pr-[23px]">
        <h1 className={`mb-[5px] text-[29px] font-medium text-[#17171a] ${variant === "ports" ? "w-[343px] tracking-[0.62px]" : "w-[295px] tracking-[0.25px]"}`}>
          {variant === "ports" ? "Open All Ports: global" : "Open HTTP: global"}
        </h1>
        <span className="flex h-[46px] w-[93px] items-center justify-center rounded-[4px] bg-[#fe0000] pb-[2px] text-[20px] font-semibold tracking-[0.37px] text-[#2e1a1c]">High</span>
        <MdOutlineOpenInNew className="ml-[29px] size-[34px] text-[#6b78fa]" />
        <svg viewBox="0 0 27 27" className="ml-auto mt-[4px] size-[27px]" stroke="#2b2d5b" strokeWidth="1.800">
          <path d="M1 1l25 25M26 1L1 26" />
        </svg>
      </div>
      <div className="flex min-h-0 flex-1 justify-between overflow-hidden pl-[34px] pr-[12px]">
        <DrawerMain variant={variant} />
        <Details variant={variant} />
      </div>
    </div>
    <div className="h-full w-[7px] bg-[#e5e9f6]">
      <div className="h-[450px] rounded-b-full bg-[#959dbd]" />
    </div>
  </section>
);

const Screen = ({ variant }: { variant: Variant }) => (
  <>
    <Sidebar />
    <FindingsList variant={variant} />
    <Drawer variant={variant} />
  </>
);

export default function App() {
  return (
    <main className="relative h-[1975px] w-[2765px] overflow-hidden bg-white font-['Inter',sans-serif]">
      <div className="absolute left-[30px] top-[30px] flex h-[1236px] w-[2202px] flex-col overflow-hidden bg-[#343434]">
        <div className="mt-[6px] flex h-[1230px] w-[2201px]">
          <div className="w-[10px] shrink-0 bg-[#0e0e0e]" />
          <Screen variant="ports" />
        </div>
      </div>
      <div className="absolute left-[879px] top-[903px] flex h-[1042px] w-[1856px] flex-col overflow-hidden bg-[#d8dfe9]">
        <div className="h-px w-full shrink-0 bg-[#4c4c4e]" />
        <div className="flex h-[1036px] shrink-0 overflow-hidden">
          <div className="w-[17px] shrink-0 bg-[#0e0e0e]" />
          <div className="flex h-[1232px] shrink-0 bg-black [zoom:0.8414]">
            <Screen variant="http" />
          </div>
        </div>
      </div>
    </main>
  );
}
